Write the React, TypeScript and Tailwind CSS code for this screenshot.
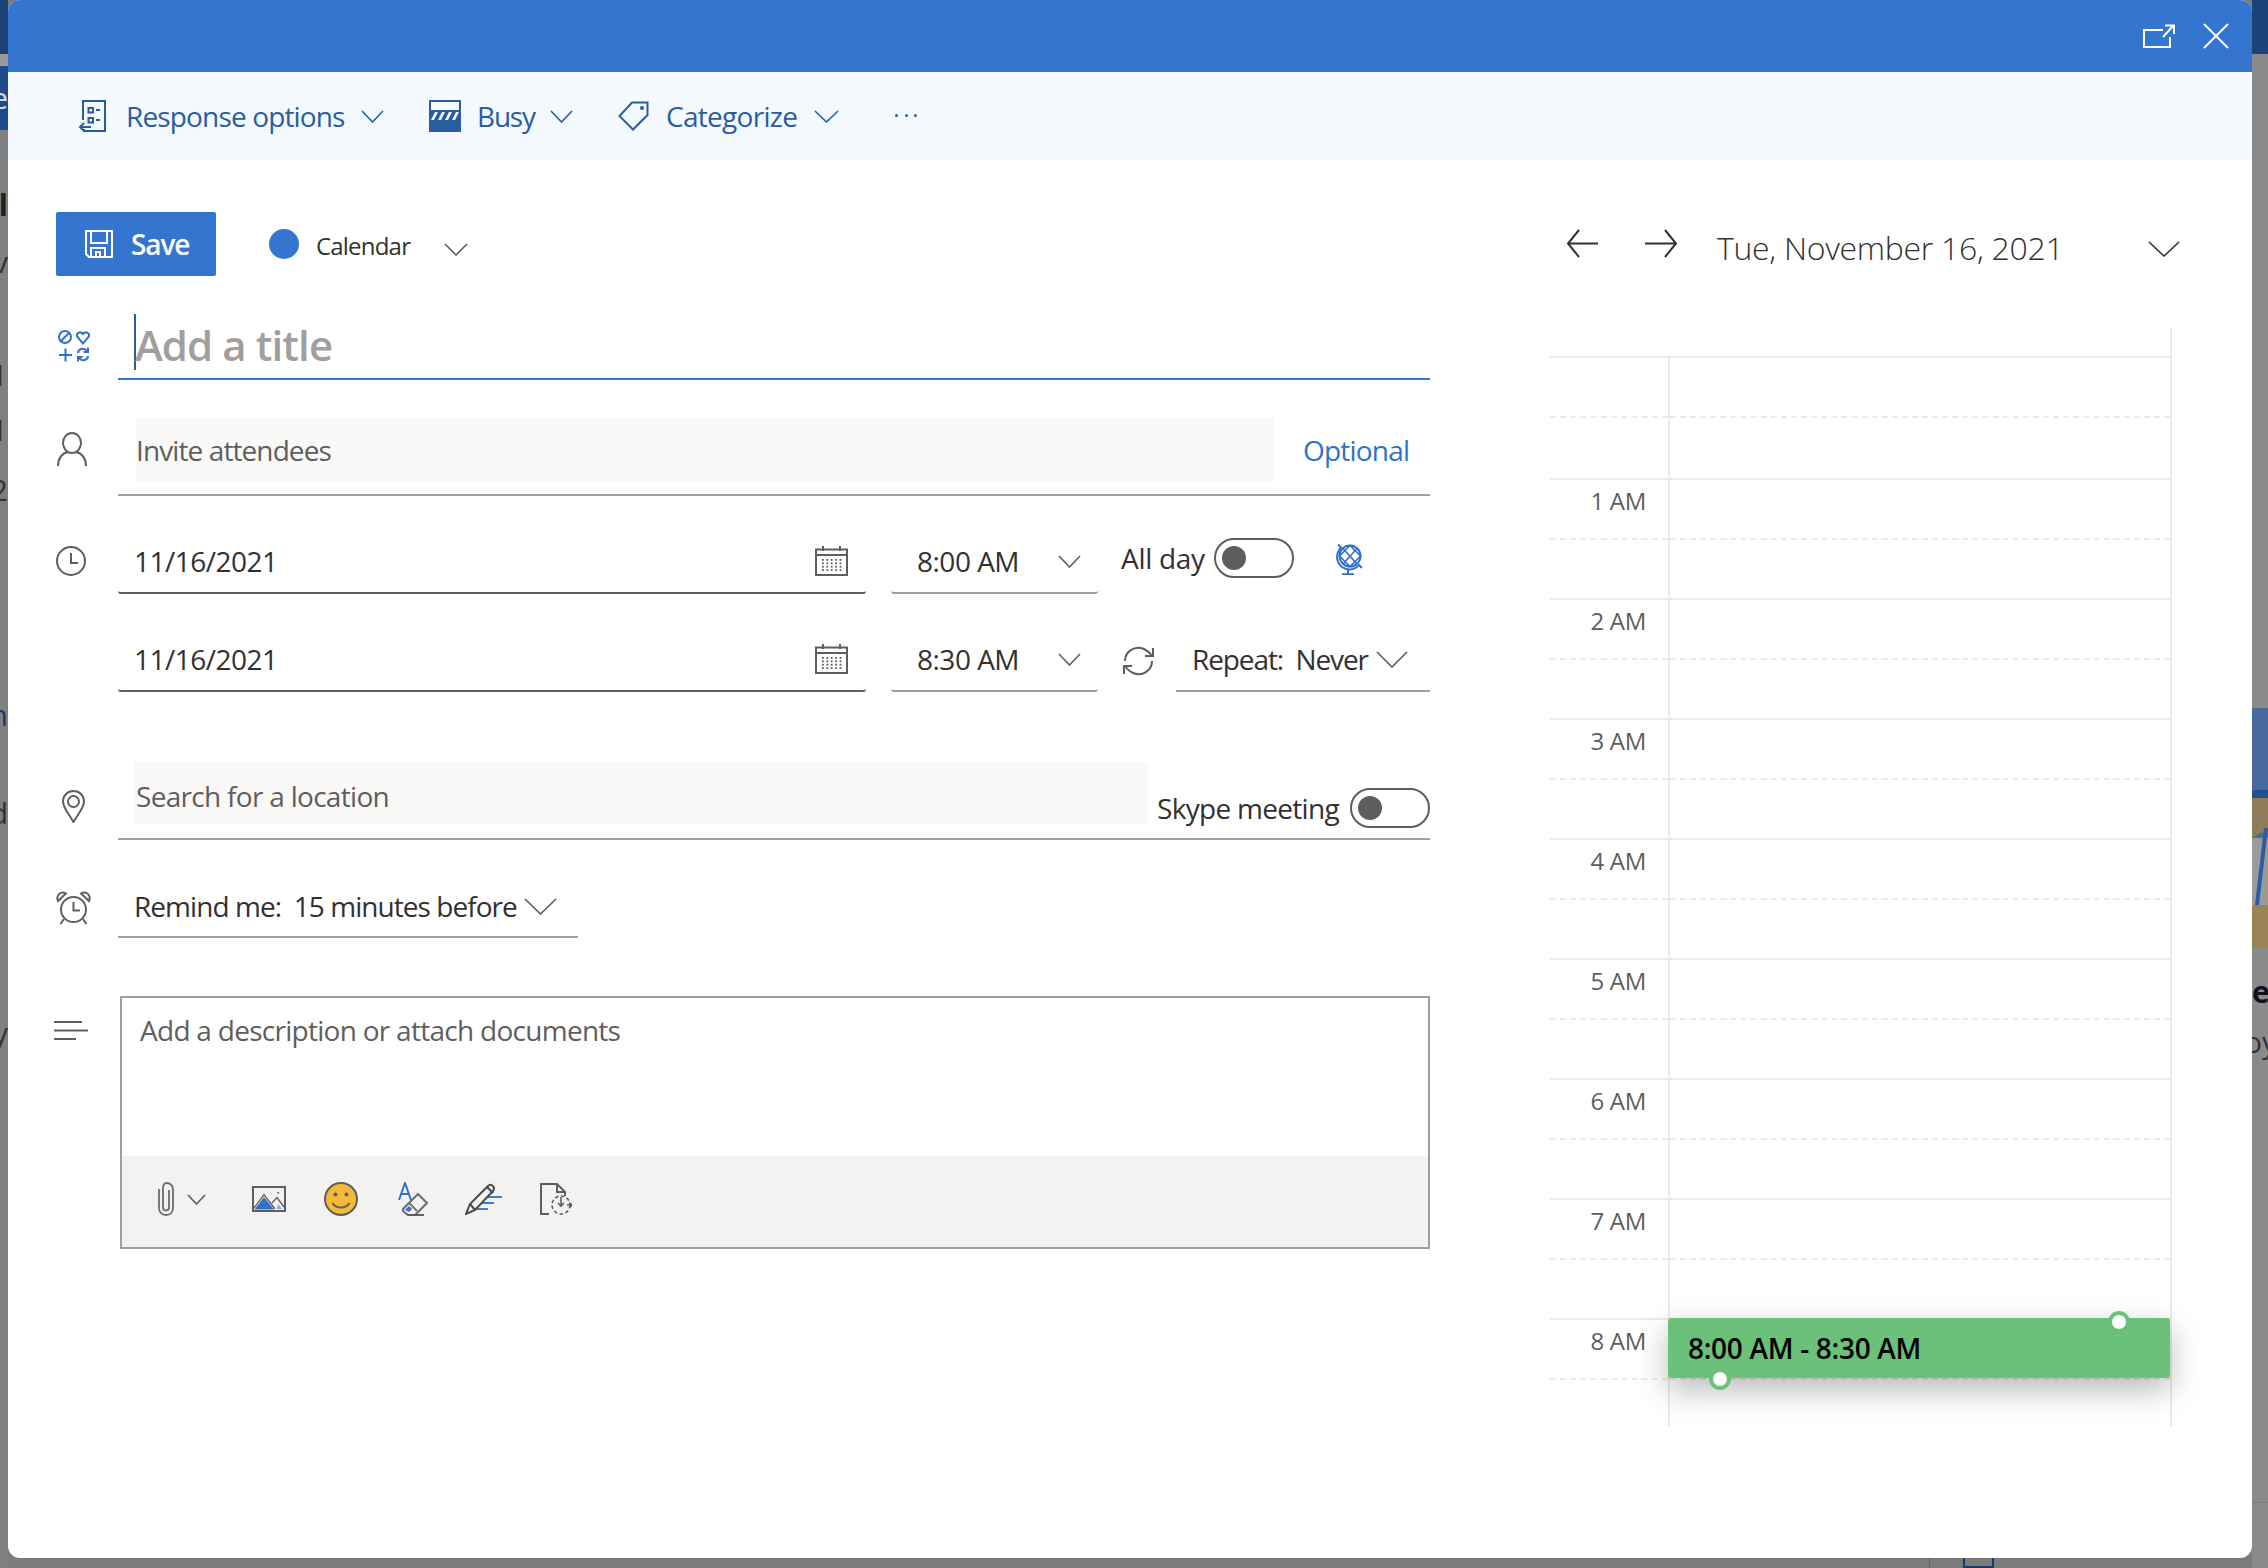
import React from "react";

const BLUE = "#2a5d9f";
const GRAY = "#605e5c";

function Chevron({ w, h, color = GRAY, sw = 1.6, className = "" }: { w: number; h: number; color?: string; sw?: number; className?: string }) {
  return (
    <svg width={w} height={h} viewBox={`0 0 ${w} ${h}`} className={`shrink-0 ${className}`} fill="none">
      <path d={`M1 1 L${w / 2} ${h - 1} L${w - 1} 1`} stroke={color} strokeWidth={sw} />
    </svg>
  );
}

function Toggle() {
  return (
    <div className="w-[80px] h-[40px] rounded-full border-2 border-[#605e5c] flex items-center pl-[6px] shrink-0">
      <div className="w-[24px] h-[24px] rounded-full bg-[#605e5c]" />
    </div>
  );
}

function CalIcon() {
  const dots = [];
  for (let r = 0; r < 4; r++) for (let c = 0; c < 5; c++) dots.push(<rect key={`${r}-${c}`} x={7 + c * 4.4} y={13 + r * 3.4} width="1.8" height="1.8" fill={GRAY} />);
  return (
    <svg width="33" height="30" viewBox="0 0 33 30" className="shrink-0" fill="none">
      <rect x="1" y="3.5" width="31" height="25.5" stroke={GRAY} strokeWidth="2" />
      <path d="M1 9 H32" stroke={GRAY} strokeWidth="2" />
      <path d="M8 0 V5 M25 0 V5" stroke={GRAY} strokeWidth="2" />
      {dots}
    </svg>
  );
}

function ResponseIcon() {
  return (
    <svg width="28" height="32" viewBox="0 0 28 32" className="shrink-0" fill="none" stroke={BLUE} strokeWidth="2">
      <path d="M5 20 V1 H27 V31 H6 V29" />
      <path d="M13 27 H2 M6 23 L2 27 L6 31" />
      <rect x="10.5" y="8" width="4.5" height="4.5" />
      <rect x="10.5" y="18" width="4.5" height="4.5" />
      <path d="M18 10 H22 M18 20 H22" />
    </svg>
  );
}

function BusyIcon() {
  return (
    <svg width="32" height="32" viewBox="0 0 32 32" className="shrink-0">
      <rect width="32" height="32" fill={BLUE} />
      <rect x="2" y="2" width="28" height="8" fill="#f4f9fe" />
      <path d="M2 20 L6 12 H9 L5 20 Z M9 20 L13 12 H16 L12 20 Z M16 20 L20 12 H23 L19 20 Z M23 20 L27 12 H30 L26 20 Z" fill="#f4f9fe" />
    </svg>
  );
}

function TagIcon() {
  return (
    <svg width="31" height="30" viewBox="0 0 31 30" className="shrink-0" fill="none" stroke={BLUE} strokeWidth="2">
      <path d="M14 1.5 H29.5 V14 L15 28.5 L1.5 15 Z" />
      <circle cx="24" cy="7" r="1" fill={BLUE} />
    </svg>
  );
}

function SaveIcon() {
  return (
    <svg width="28" height="28" viewBox="0 0 28 28" className="shrink-0" fill="none" stroke="#fff" strokeWidth="2">
      <path d="M1 1 H27 V27 H4 L1 24 Z" />
      <path d="M6 1 V13 H22 V1" />
      <path d="M6 27 V18 H20 V27 M11 27 V22 H15 V27" />
    </svg>
  );
}

function TitleIcon() {
  const c = "#2f72c8";
  return (
    <svg width="32" height="32" viewBox="0 0 32 32" className="shrink-0" fill="none" stroke={c} strokeWidth="2">
      <ellipse cx="7" cy="7" rx="6" ry="6" />
      <path d="M3 11 L11 3" />
      <path d="M25 13.5 L19.5 7 C17.5 3.5 22 0.5 25 4 C28 0.5 32.5 3.5 30.5 7 Z" />
      <path d="M1 25 H14 M7.5 18.5 V31.5" />
      <path d="M20 23 C20 19 26 17 29 21 M30 17.5 V22 H25.5" />
      <path d="M30 26 C30 30 24 32 21 28 M20 31.5 V27 H24.5" />
    </svg>
  );
}

function PersonIcon() {
  return (
    <svg width="30" height="34" viewBox="0 0 30 34" className="shrink-0" fill="none" stroke={GRAY} strokeWidth="2">
      <ellipse cx="15" cy="11" rx="9" ry="10" />
      <path d="M1 34 C1 26 6 20.5 11 20 M29 34 C29 26 24 20.5 19 20" />
    </svg>
  );
}

function ClockIcon() {
  return (
    <svg width="30" height="30" viewBox="0 0 30 30" className="shrink-0" fill="none" stroke={GRAY} strokeWidth="2">
      <circle cx="15" cy="15" r="14" />
      <path d="M15 7 V17 H22" />
    </svg>
  );
}

function GlobeIcon() {
  const c = "#2f72c8";
  return (
    <svg width="28" height="31" viewBox="0 0 28 31" className="shrink-0" fill="none" stroke={c} strokeWidth="2">
      <circle cx="15" cy="12" r="10.5" />
      <path d="M8 4.5 L21.5 19.5 M22 4.5 L8.5 19.5 M15 1.5 L4.5 12 L15 22.5 L25.5 12 Z" strokeWidth="1.6" />
      <path d="M3 0.5 L6 3.5 C-0.5 11 2 19 7 23 C13 27 20 26 24 21 L27 24" />
      <path d="M13 26 V30 M7 30.2 H19" />
    </svg>
  );
}

function RepeatIcon() {
  return (
    <svg width="31" height="30" viewBox="0 0 31 30" className="shrink-0" fill="none" stroke={GRAY} strokeWidth="2">
      <path d="M2 15 C2 6 11 -1 21 3 C24 4.5 27 7 29 9.5" />
      <path d="M30 2 V10 H22" />
      <path d="M29 15 C29 24 20 31 10 27 C7 25.5 4 23 2 20.5" />
      <path d="M1 28 V20 H9" />
    </svg>
  );
}

function PinIcon() {
  return (
    <svg width="23" height="33" viewBox="0 0 23 33" className="shrink-0" fill="none" stroke={GRAY} strokeWidth="2">
      <path d="M11.5 32 C7 24 1 18 1 11.5 C1 5.5 5.5 1 11.5 1 C17.5 1 22 5.5 22 11.5 C22 18 16 24 11.5 32 Z" />
      <circle cx="11.5" cy="11.5" r="5.5" />
    </svg>
  );
}

function AlarmIcon() {
  return (
    <svg width="35" height="34" viewBox="0 0 35 34" className="shrink-0" fill="none" stroke={GRAY} strokeWidth="2">
      <circle cx="17.5" cy="18.5" r="12.5" />
      <path d="M17.5 11 V19.5 H24" />
      <path d="M2 10 C-0.5 4 5 -0.5 10 2.5 Z M33 10 C35.5 4 30 -0.5 25 2.5 Z" />
      <path d="M8 28 L4.5 33 M27 28 L30.5 33" />
    </svg>
  );
}

function LinesIcon() {
  return (
    <svg width="34" height="19" viewBox="0 0 34 19" className="shrink-0" fill="none" stroke={GRAY} strokeWidth="2">
      <path d="M0 1 H28 M0 9.5 H34 M0 18 H22" />
    </svg>
  );
}

function ClipIcon() {
  return (
    <svg width="16" height="34" viewBox="0 0 16 34" className="shrink-0" fill="none" stroke="#6d6b69" strokeWidth="1.8">
      <path d="M11 8 V25 C11 27.5 9.5 28.5 8 28.5 C6.5 28.5 5 27.5 5 25 V6 C5 3 6.5 1 8.5 1 C11.5 1 15 3 15 7 V26 C15 30.5 12 33 8 33 C4 33 1 30.5 1 26 V7" />
    </svg>
  );
}

function ImageIcon() {
  return (
    <svg width="34" height="26" viewBox="0 0 34 26" className="shrink-0" fill="none">
      <rect x="1" y="1" width="32" height="24" stroke={GRAY} strokeWidth="2" fill="#f3f2f1" />
      <path d="M2.5 23.5 L12 11 L22 23.5 Z" fill="#2f72c8" />
      <path d="M2 22 L12 8.5 L23 23" stroke={GRAY} strokeWidth="1.3" />
      <path d="M20 17 L25 11.5 L32 21" stroke={GRAY} strokeWidth="1.3" />
      <path d="M25 23 L30 23 L26 18 Z" fill="#7fa9de" />
      <rect x="25.5" y="6" width="1.6" height="1.6" fill={GRAY} />
    </svg>
  );
}

function SmileIcon() {
  return (
    <svg width="34" height="34" viewBox="0 0 34 34" className="shrink-0" fill="none">
      <circle cx="17" cy="17" r="16" fill="#f4b93b" stroke={GRAY} strokeWidth="2" />
      <circle cx="11.5" cy="12.5" r="2" fill={GRAY} />
      <circle cx="22.5" cy="12.5" r="2" fill={GRAY} />
      <path d="M8.5 21 C12 27 22 27 25.5 21" stroke={GRAY} strokeWidth="2" />
    </svg>
  );
}

function EraseIcon() {
  return (
    <svg width="30" height="34" viewBox="0 0 30 34" className="shrink-0" fill="none">
      <path d="M1 18 L7 1 L13 18 M3 12 H11" stroke="#2f72c8" strokeWidth="2" />
      <path d="M5 27 L20 12 L29 21 L17 33 H10 L5 29 Z" stroke="#6d7278" strokeWidth="2.2" fill="#f3f2f1" />
      <path d="M11 21 L19 29" stroke="#6d7278" strokeWidth="2" />
      <path d="M7 28 L11 24 L14 27 L11 30 Z" fill="#2f72c8" />
      <path d="M10 33 H26" stroke={GRAY} strokeWidth="2" />
    </svg>
  );
}

function PenIcon() {
  return (
    <svg width="38" height="32" viewBox="0 0 38 32" className="shrink-0" fill="none">
      <path d="M20 14 H37 M15 20 H29 M10 26 H23" stroke="#3b82c9" strokeWidth="2" />
      <path d="M1 31 L5 21 L23 3 C26 0 31 4 28 8 L10 27 Z" stroke="#4a4a4a" strokeWidth="2" fill="#f3f2f1" />
      <path d="M5 21 L10 27 M22 4 L28 10" stroke="#4a4a4a" strokeWidth="2" />
    </svg>
  );
}

function DocIcon() {
  return (
    <svg width="32" height="32" viewBox="0 0 32 32" className="shrink-0" fill="none" stroke={GRAY} strokeWidth="2">
      <path d="M9 31 H1 V1 H17 L25 9 V13 M17 1 V9 H25" />
      <circle cx="21" cy="22" r="9" strokeDasharray="3.5 2.5" strokeWidth="1.6" />
      <path d="M21 14 V23 M18 20 L21 23 L24 20 M27 22 H32 M30 20 L32 22 L30 24" strokeWidth="1.6" />
    </svg>
  );
}

function HourRow({ label, height, children }: { label?: string; height: string; children?: React.ReactNode }) {
  return (
    <div className={`flex border-t-2 border-[#edebe9] shrink-0 ${height}`}>
      <div className="w-[118px] h-[60px] border-b-2 border-dashed border-[#edebe9] pt-[5px] pr-[22px] text-right text-[24px] leading-[32px] text-[#605e5c] tracking-[-0.3px]">
        {label}
      </div>
      <div className="flex-1 border-l-2 border-[#edebe9] relative">
        <div className="h-[60px] border-b-2 border-dashed border-[#edebe9]" />
        {children}
      </div>
    </div>
  );
}

function Frag({ children, className }: { children: React.ReactNode; className: string }) {
  return <div className={`flex justify-end h-[30px] text-[30px] leading-[30px] whitespace-nowrap shrink-0 ${className}`}>{children}</div>;
}

export default function App() {
  const hours = ["1 AM", "2 AM", "3 AM", "4 AM", "5 AM", "6 AM", "7 AM"];
  return (
    <div className="w-[2268px] h-[1568px] flex overflow-hidden bg-[#7b7b7b] font-['Open_Sans',sans-serif] text-[28px] leading-[40px] text-[#323130]">
      {/* dimmed page, left edge */}
      <div className="w-[8px] h-full bg-[#808080] overflow-hidden flex flex-col shrink-0">
        <div className="h-[54px] bg-[#1c4278] shrink-0" />
        <div className="h-[12px] bg-[#9a9a9a] shrink-0" />
        <div className="h-[64px] bg-[#204b8a] flex justify-end items-center text-[30px] text-[#d5dbe6] shrink-0">e</div>
        <Frag className="mt-[60px] font-bold text-[#222]">l</Frag>
        <Frag className="mt-[27px] text-[#333]">v</Frag>
        <Frag className="mt-[83px] text-[#333]">1</Frag>
        <Frag className="mt-[25px] text-[#333]">1</Frag>
        <Frag className="mt-[30px] text-[#333]">2</Frag>
        <Frag className="mt-[195px] text-[#173a6b]">n</Frag>
        <Frag className="mt-[68px] text-[#333]">d</Frag>
        <Frag className="mt-[190px] text-[#333]">y</Frag>
      </div>

      <div className="w-[2244px] h-full flex flex-col shrink-0">
        {/* dialog */}
        <div className="h-[1558px] bg-white rounded-[12px] overflow-hidden flex flex-col shrink-0">
          <div className="h-[72px] bg-[#3476cf] flex items-center justify-end pr-[23px] shrink-0">
            <svg width="32" height="24" viewBox="0 0 32 24" fill="none" stroke="#fff" strokeWidth="2" className="shrink-0 mr-[28px]">
              <path d="M20 6 H1 V23 H27 V13" />
              <path d="M20 13 L30 2 M22 1.5 H31 V10" />
            </svg>
            <svg width="26" height="26" viewBox="0 0 26 26" fill="none" stroke="#fff" strokeWidth="2" className="shrink-0">
              <path d="M1 1 L25 25 M25 1 L1 25" />
            </svg>
          </div>

          <div className="h-[88px] bg-[#f4f9fe] flex items-center pl-[70px] text-[#2a5d9f] shrink-0">
            <ResponseIcon />
            <span className="ml-[20px] w-[218px] whitespace-nowrap tracking-[-0.85px]">Response options</span>
            <Chevron w={23} h={13} color={BLUE} className="ml-[17px]" />
            <div className="ml-[45px]"><BusyIcon /></div>
            <span className="ml-[16px] w-[57px] whitespace-nowrap tracking-[-1.2px]">Busy</span>
            <Chevron w={23} h={13} color={BLUE} className="ml-[16px]" />
            <div className="ml-[45px]"><TagIcon /></div>
            <span className="ml-[17px] w-[132px] whitespace-nowrap tracking-[-0.7px]">Categorize</span>
            <Chevron w={25} h={13} color={BLUE} className="ml-[16px]" />
            <span className="ml-[56px] w-[22px] flex justify-between mt-[-2px]">
              <i className="w-[3px] h-[3px] rounded-full bg-[#2a5d9f]" />
              <i className="w-[3px] h-[3px] rounded-full bg-[#2a5d9f]" />
              <i className="w-[3px] h-[3px] rounded-full bg-[#2a5d9f]" />
            </span>
          </div>

          <div className="flex flex-1">
            {/* form */}
            <div className="ml-[48px] w-[1374px] flex flex-col shrink-0">
              <div className="mt-[52px] h-[64px] flex items-center">
                <div className="w-[160px] h-[64px] rounded-[2px] bg-[#3476cf] flex items-center pl-[29px] text-white font-semibold">
                  <SaveIcon />
                  <span className="ml-[18px] tracking-[-1.1px]">Save</span>
                </div>
                <div className="ml-[53px] w-[30px] h-[30px] rounded-full bg-[#3476cf]" />
                <span className="ml-[17px] w-[94px] text-[24px] mt-[4px] tracking-[-0.8px] whitespace-nowrap">Calendar</span>
                <Chevron w={24} h={13} className="ml-[34px] mt-[10px]" />
              </div>

              <div className="mt-[38px] h-[66px] flex">
                <div className="w-[62px] pl-[2px] pt-[16px]"><TitleIcon /></div>
                <div className="flex-1 border-b-2 border-[#3476cf] pl-[16px] flex items-start">
                  <div className="w-[2px] h-[56px] bg-[#2a5d9f]" />
                  <span className="text-[42px] leading-[62px] ml-[-1px] font-semibold text-[#a19f9d] tracking-[-0.9px] whitespace-nowrap">Add a title</span>
                </div>
              </div>

              <div className="mt-[38px] h-[78px] flex">
                <div className="w-[62px] pl-[1px] pt-[14px]"><PersonIcon /></div>
                <div className="flex-1 border-b-2 border-[#a19f9d] pl-[18px] flex items-start">
                  <div className="w-[1138px] h-[64px] bg-[#faf9f8] rounded-[2px] flex items-center text-[#605e5c] tracking-[-0.9px]">Invite attendees</div>
                  <span className="ml-[29px] h-[64px] flex items-center text-[#2f72c8] tracking-[-0.8px]">Optional</span>
                </div>
              </div>

              <div className="mt-[34px] h-[64px] flex items-start">
                <div className="w-[62px] pt-[16px]"><ClockIcon /></div>
                <div className="w-[748px] h-[64px] border-b-2 border-[#605e5c] rounded-b-[3px] flex items-center justify-between pl-[16px] pr-[18px]">
                  <span className="tracking-[-0.5px]">11/16/2021</span>
                  <CalIcon />
                </div>
                <div className="ml-[25px] w-[207px] h-[64px] border-b-2 border-[#a19f9d] rounded-b-[3px] flex items-center justify-between pl-[26px] pr-[17px]">
                  <span className="tracking-[-0.5px] whitespace-nowrap">8:00 AM</span>
                  <Chevron w={23} h={13} />
                </div>
                <div className="ml-[23px] mt-[8px] h-[40px] flex items-center">
                  <span className="w-[83px] whitespace-nowrap tracking-[-0.3px]">All day</span>
                  <div className="ml-[10px]"><Toggle /></div>
                  <div className="ml-[41px] mt-[2px]"><GlobeIcon /></div>
                </div>
              </div>

              <div className="mt-[34px] h-[64px] flex items-start">
                <div className="w-[62px]" />
                <div className="w-[748px] h-[64px] border-b-2 border-[#605e5c] rounded-b-[3px] flex items-center justify-between pl-[16px] pr-[18px]">
                  <span className="tracking-[-0.5px]">11/16/2021</span>
                  <CalIcon />
                </div>
                <div className="ml-[25px] w-[207px] h-[64px] border-b-2 border-[#a19f9d] rounded-b-[3px] flex items-center justify-between pl-[26px] pr-[17px]">
                  <span className="tracking-[-0.5px] whitespace-nowrap">8:30 AM</span>
                  <Chevron w={23} h={13} />
                </div>
                <div className="ml-[25px] mt-[18px]"><RepeatIcon /></div>
                <div className="ml-[22px] w-[254px] h-[64px] border-b-2 border-[#a19f9d] flex items-center pl-[16px]">
                  <span className="w-[176px] whitespace-nowrap tracking-[-1.1px]">Repeat:&nbsp; Never</span>
                  <Chevron w={32} h={17} className="ml-[8px]" />
                </div>
              </div>

              <div className="mt-[70px] h-[78px] flex">
                <div className="w-[62px] pl-[6px] pt-[28px]"><PinIcon /></div>
                <div className="flex-1 border-b-2 border-[#a19f9d] pl-[16px] flex items-start">
                  <div className="w-[1014px] h-[62px] bg-[#faf9f8] rounded-[2px] flex items-center pl-[2px] pt-[5px] text-[#605e5c] tracking-[-0.7px]">Search for a location</div>
                  <div className="ml-[9px] mt-[26px] h-[40px] flex items-center">
                    <span className="w-[182px] whitespace-nowrap tracking-[-0.7px]">Skype meeting</span>
                    <div className="ml-[11px]"><Toggle /></div>
                  </div>
                </div>
              </div>

              <div className="mt-[36px] h-[62px] flex items-start">
                <div className="w-[62px] pt-[15px]"><AlarmIcon /></div>
                <div className="w-[460px] h-[62px] border-b-2 border-[#a19f9d] flex items-center pl-[16px]">
                  <span className="w-[382px] whitespace-nowrap tracking-[-0.95px]">Remind me:&nbsp; 15 minutes before</span>
                  <Chevron w={33} h={17} className="ml-[8px]" />
                </div>
              </div>

              <div className="mt-[58px] h-[253px] flex items-start">
                <div className="w-[66px] ml-[-2px] pt-[25px]"><LinesIcon /></div>
                <div className="w-[1310px] h-[253px] border-2 border-[#a19f9d] flex flex-col">
                  <div className="h-[158px] pt-[12px] pl-[18px] text-[#605e5c] tracking-[-0.72px]">Add a description or attach documents</div>
                  <div className="flex-1 bg-[#f3f2f1] flex items-center pl-[36px] pb-[5px]">
                    <ClipIcon />
                    <Chevron w={19} h={11} className="ml-[13px]" />
                    <div className="ml-[46px]"><ImageIcon /></div>
                    <div className="ml-[38px]"><SmileIcon /></div>
                    <div className="ml-[40px]"><EraseIcon /></div>
                    <div className="ml-[37px]"><PenIcon /></div>
                    <div className="ml-[37px]"><DocIcon /></div>
                  </div>
                </div>
              </div>
            </div>

            {/* day column */}
            <div className="ml-[120px] w-[622px] flex flex-col shrink-0">
              <div className="mt-[69px] h-[29px] flex items-center">
                <svg width="32" height="29" viewBox="0 0 32 29" fill="none" stroke="#323130" strokeWidth="2" className="ml-[16px] shrink-0">
                  <path d="M32 14.5 H2 M13 1 L2 14.5 L13 28" />
                </svg>
                <svg width="33" height="29" viewBox="0 0 33 29" fill="none" stroke="#323130" strokeWidth="2" className="ml-[47px] shrink-0">
                  <path d="M0 14.5 H31 M20 1 L31 14.5 L20 28" />
                </svg>
                <span className="ml-[39px] w-[343px] whitespace-nowrap text-[32px] font-light tracking-[-0.3px] mt-[8px]">Tue, November 16, 2021</span>
                <Chevron w={32} h={16} color="#323130" className="ml-[88px] mt-[10px]" />
              </div>
              <div className="mt-[70px] h-[1098px] pt-[28px] border-r-2 border-[#edebe9] flex flex-col">
                <HourRow height="h-[122px]" />
                {hours.map((h) => (
                  <HourRow key={h} label={h} height="h-[120px]" />
                ))}
                <HourRow label="8 AM" height="h-[108px]">
                  <div className="absolute left-[-2px] top-[-2px] w-[502px] h-[60px] rounded-[3px] bg-[#6cc17a] shadow-[0_12px_32px_rgba(0,0,0,0.28)] flex items-center pl-[20px] text-black font-semibold tracking-[-0.3px] whitespace-nowrap">
                    8:00 AM - 8:30 AM
                    <div className="absolute left-[440px] top-[-7px] w-[22px] h-[22px] rounded-full bg-white border-[4px] border-[#6cc17a]" />
                    <div className="absolute left-[41px] top-[50px] w-[22px] h-[22px] rounded-full bg-white border-[4px] border-[#6cc17a]" />
                  </div>
                </HourRow>
              </div>
            </div>
          </div>
        </div>
        {/* dimmed page, below the dialog */}
        <div className="flex-1 overflow-hidden pl-[1921px] flex items-start">
          <div className="h-[10px] border-l border-[#666] pl-[33px]">
            <div className="w-[31px] h-[10px] border-2 border-t-0 border-[#173a6b]" />
          </div>
        </div>
      </div>

      {/* dimmed page, right edge */}
      <div className="w-[16px] h-full bg-[#8a8a8a] overflow-hidden flex flex-col shrink-0">
        <div className="h-[54px] bg-[#1c4278] shrink-0" />
        <div className="h-[654px] shrink-0" />
        <svg width="16" height="240" viewBox="0 0 16 240" className="shrink-0">
          <path d="M0 0 H16 V240 H0 Z" fill="#9a9a9a" />
          <path d="M0 0 H16 V130 H0 Z" fill="#466a9e" />
          <path d="M0 82 H16 V90 H0 Z" fill="#24508f" />
          <path d="M0 90 H16 V125 H8 L0 130 Z" fill="#8f7d5a" />
          <path d="M12 120 H16 L7 197 H3 Z" fill="#2d5ba3" />
          <path d="M0 197 H16 V240 H0 Z" fill="#9a8456" />
        </svg>
        <Frag className="mt-[29px] justify-start font-bold text-[#111]">e</Frag>
        <Frag className="mt-[20px] justify-start text-[#333]"><span className="ml-[-8px]">oy</span></Frag>
        <div className="h-[446px] shrink-0 border-b border-[#7a7a7a]" />
      </div>
    </div>
  );
}
